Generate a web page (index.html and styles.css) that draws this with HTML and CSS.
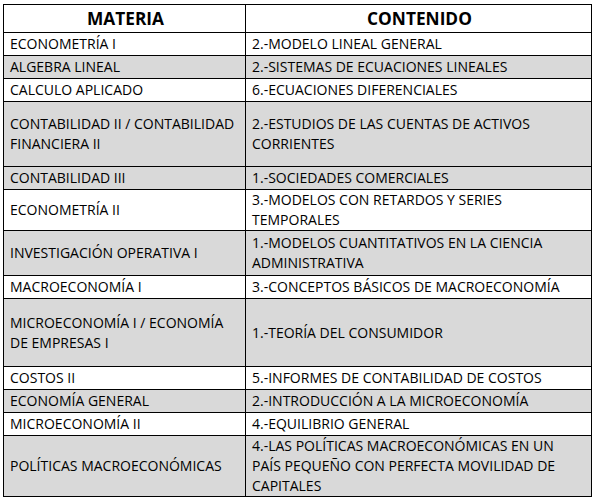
FILE: index.html
```html
<!DOCTYPE html>
<html lang="es">
<head>
<meta charset="utf-8">
<title>Materias</title>
<link rel="stylesheet" href="styles.css">
</head>
<body>
<table class="grid">
  <colgroup><col class="c1"><col class="c2"></colgroup>
  <thead>
    <tr class="hd"><th>MATERIA</th><th>CONTENIDO</th></tr>
  </thead>
  <tbody>
    <tr class="r1"><td>ECONOMETRÍA I</td><td>2.-MODELO LINEAL GENERAL</td></tr>
    <tr class="r1 g"><td>ALGEBRA LINEAL</td><td>2.-SISTEMAS DE ECUACIONES LINEALES</td></tr>
    <tr class="r1"><td>CALCULO APLICADO</td><td>6.-ECUACIONES DIFERENCIALES</td></tr>
    <tr class="r2x g"><td>CONTABILIDAD II / CONTABILIDAD FINANCIERA II</td><td>2.-ESTUDIOS DE LAS CUENTAS DE ACTIVOS CORRIENTES</td></tr>
    <tr class="r1 g"><td>CONTABILIDAD III</td><td>1.-SOCIEDADES COMERCIALES</td></tr>
    <tr class="r2"><td>ECONOMETRÍA II</td><td>3.-MODELOS CON RETARDOS Y SERIES TEMPORALES</td></tr>
    <tr class="r2b g"><td>INVESTIGACIÓN OPERATIVA I</td><td>1.-MODELOS CUANTITATIVOS EN LA CIENCIA ADMINISTRATIVA</td></tr>
    <tr class="r1"><td>MACROECONOMÍA I</td><td>3.-CONCEPTOS BÁSICOS DE MACROECONOMÍA</td></tr>
    <tr class="r2y g"><td>MICROECONOMÍA I / ECONOMÍA DE EMPRESAS I</td><td>1.-TEORÍA DEL CONSUMIDOR</td></tr>
    <tr class="r1"><td>COSTOS II</td><td>5.-INFORMES DE CONTABILIDAD DE COSTOS</td></tr>
    <tr class="r1 g"><td>ECONOMÍA GENERAL</td><td>2.-INTRODUCCIÓN A LA MICROECONOMÍA</td></tr>
    <tr class="r1"><td>MICROECONOMÍA II</td><td>4.-EQUILIBRIO GENERAL</td></tr>
    <tr class="r3 g"><td>POLÍTICAS MACROECONÓMICAS</td><td>4.-LAS POLÍTICAS MACROECONÓMICAS EN UN PAÍS PEQUEÑO CON PERFECTA MOVILIDAD DE CAPITALES</td></tr>
  </tbody>
</table>
</body>
</html>
```
FILE: styles.css
```css
html, body {
  margin: 0;
  padding: 0;
  background: #ffffff;
}
body {
  padding: 4px 0 0 3px;
  font-family: "Open Sans", "Liberation Sans", sans-serif;
  color: #000;
}
.grid {
  border-collapse: collapse;
  table-layout: fixed;
  width: 588px;
}
.c1 { width: 242px; }
.c2 { width: 346px; }
.grid th, .grid td {
  border: 1px solid #000;
  padding: 0 4px 0 6px;
  vertical-align: middle;
  text-align: left;
  font-size: 14px;
  line-height: 20px;
  font-weight: normal;
  white-space: normal;
}
.grid td + td { padding-right: 14px; }
.grid th {
  text-align: center;
  font-weight: bold;
  font-size: 17.3px;
  line-height: 22px;
}
.hd { height: 28px; }
.r1 { height: 23px; }
.r2 { height: 39px; }
.r2b { height: 45px; }
.r2x { height: 65px; }
.r2y { height: 68px; }
.r3 { height: 60px; }
.g td { background: #d9d9d9; }
```
